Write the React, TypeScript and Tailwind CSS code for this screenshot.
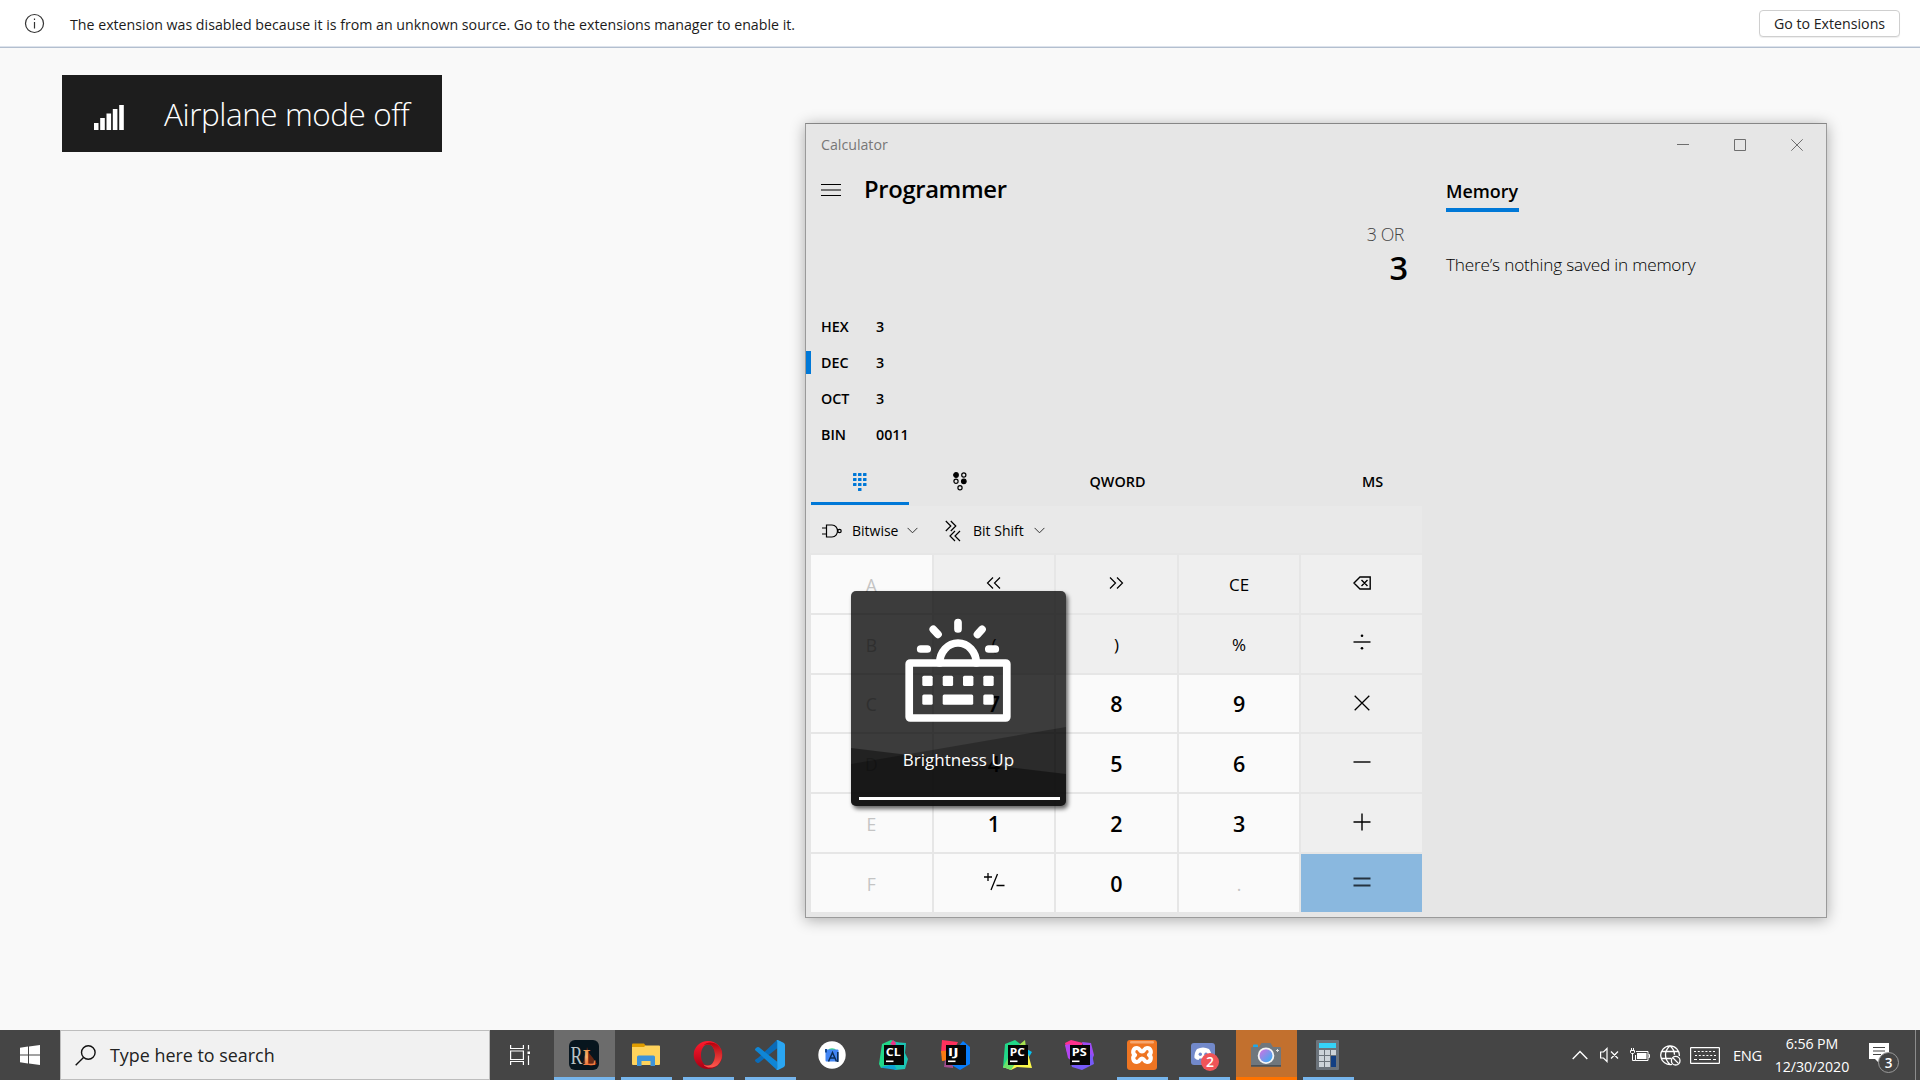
import React from "react";

const SANS = "font-['Open_Sans','Noto_Sans',sans-serif]";

function InfoBar() {
  return (
    <header className="flex h-12 items-center border-b border-[#b3bfcf] bg-white pr-5 pl-[24px] shadow-[inset_0_-1px_0_#dde3ec]">
      <svg width="21" height="21" viewBox="0 0 21 21" fill="none" stroke="#333" strokeWidth="1.2">
        <circle cx="10.5" cy="10.5" r="9" />
        <path d="M10.5 9v6.5M10.5 5.4v1.6" />
      </svg>
      <span className="mt-[2px] ml-[25px] flex-1 text-[14.2px] text-[#1b1b1b]">
        The extension was disabled because it is from an unknown source. Go to the extensions manager to enable it.
      </span>
      <button className="flex h-[27px] w-[141px] items-center justify-center rounded border border-[#cfcfcf] bg-white text-[14.2px] text-[#222] shadow-[0_1px_1px_#eee]">
        Go to Extensions
      </button>
    </header>
  );
}

function AirplaneToast() {
  return (
    <div className="mt-[27px] ml-[62px] flex h-[77px] w-[380px] items-center bg-[#1d1d1d] pl-[32px] text-white">
      <svg width="30" height="26" viewBox="0 0 30 26" fill="#fff" className="mt-[7px]">
        <rect x="0" y="19" width="4.5" height="7" />
        <rect x="6.2" y="14" width="4.6" height="12" />
        <rect x="12.5" y="9.5" width="4.6" height="16.5" />
        <rect x="18.8" y="5" width="4.6" height="21" />
        <rect x="25.2" y="1" width="4.6" height="25" />
      </svg>
      <span className="ml-[40px] text-[31.5px] font-light tracking-[-0.45px] whitespace-nowrap">Airplane mode off</span>
    </div>
  );
}

const bases = [
  ["HEX", "3"],
  ["DEC", "3"],
  ["OCT", "3"],
  ["BIN", "0011"],
];

const Stroke = ({ w = 18, d, sw = 1.4 }: { w?: number; d: string; sw?: number }) => (
  <svg width={w} height={w} viewBox={`0 0 ${w} ${w}`} fill="none" stroke="currentColor" strokeWidth={sw} className="-mt-[4px]">
    <path d={d} />
  </svg>
);

type Kind = "off" | "num" | "op" | "fn" | "eq";
const keys: [Kind, React.ReactNode][] = [
  ["off", "A"],
  ["op", <Stroke d="M8 3.5 2.500 9l5.500 5.500M15 3.500 9.500 9l5.500 5.500" sw={1.2} />],
  ["op", <Stroke d="M3 3.500 8.500 9l-5.500 5.500M10 3.500 15.500 9l-5.500 5.500" sw={1.2} />],
  ["op", "CE"],
  ["op", <Stroke d="M17.200 3H7L1 9l6 6h10.200zM8.500 6l6 6M14.500 6l-6 6" />],
  ["off", "B"],
  ["op", "("],
  ["op", ")"],
  ["op", "%"],
  [
    "op",
    <svg width="18" height="18" viewBox="0 0 18 18" className="-mt-[5px]">
      <path d="M.5 9h17" stroke="#000" strokeWidth="1.4" />
      <circle cx="9" cy="2.700" r="1.300" />
      <circle cx="9" cy="15.300" r="1.300" />
    </svg>,
  ],
  ["off", "C"],
  ["num", "7"],
  ["num", "8"],
  ["num", "9"],
  ["op", <Stroke d="M1.700 1.700 16.300 16.300M16.300 1.700 1.700 16.300" sw={1.3} />],
  ["off", "D"],
  ["num", "4"],
  ["num", "5"],
  ["num", "6"],
  ["op", <Stroke d="M.5 9h17" />],
  ["off", "E"],
  ["num", "1"],
  ["num", "2"],
  ["num", "3"],
  ["op", <Stroke d="M.5 9h17M9 .5v17" />],
  ["off", "F"],
  ["fn", <Stroke w={22} d="M1 6h8M5 2v8M14.500 3 8 19M13.500 14.500h8" sw={1.3} />],
  ["num", "0"],
  ["off", "."],
  ["eq", <Stroke d="M.5 5.500h17M.5 12.500h17" sw={1.8} />],
];
const kindClass: Record<Kind, string> = {
  off: "bg-[#fafafa] text-[#c4c4c4] text-[17.500px]",
  num: "bg-[#fafafa] text-black text-[21.500px] font-semibold",
  op: "bg-[#efefef] text-black text-[17px]",
  fn: "bg-[#fafafa] text-black",
  eq: "bg-[#8ab8df] text-[#253340]",
};

const Chevron = () => (
  <svg width="11" height="7" viewBox="0 0 11 7" fill="none" stroke="#333" strokeWidth="1">
    <path d="M.6.900 5.500 5.800 10.400.900" />
  </svg>
);

function Calculator() {
  return (
    <section className="absolute top-[123px] left-[805px] flex h-[795px] w-[1022px] flex-col border border-[#9a9a9a] border-t-[#868686] bg-[#e6e6e6] text-black shadow-[0_2px_14px_rgba(0,0,0,0.32)]">
      <div className="flex h-[42px] shrink-0 items-center pr-px pl-[15px] text-[#777]">
        <span className="flex-1 text-[14.200px]">Calculator</span>
        {["M0 5.500h12", "M.5.5h11v11H.5z", "M.3.3l11.400 11.400M11.700.3.3 11.700"].map((d) => (
          <span key={d} className="flex w-[57px] justify-center">
            <svg width="12" height="12" viewBox="0 0 12 12" fill="none" stroke="#6e6e6e" className="-mt-px">
              <path d={d} />
            </svg>
          </span>
        ))}
      </div>
      <div className="flex flex-1">
        <div className="flex w-[617px] flex-col">
          <div className="flex h-[48px] items-center pl-[15px]">
            <svg width="20" height="12" viewBox="0 0 20 12" stroke="#000" className="-mt-px">
              <path d="M0 .5h20M0 6h20M0 11.500h20" />
            </svg>
            <span className="ml-[23px] text-[23.800px] font-semibold tracking-[-0.350px]">Programmer</span>
          </div>
          <div className="flex h-[41px] items-center justify-end pr-[19px] text-[17.800px] font-light tracking-[-0.400px] text-[#444]">3 OR</div>
          <div className="flex h-[29px] items-center justify-end pr-[15px] pb-[3px] text-[32.500px] leading-none font-semibold">3</div>
          <div className="mt-[25px]">
            {bases.map(([name, value]) => (
              <div key={name} className="relative flex h-[36px] items-center pb-px pl-[15px] text-[14.300px] font-semibold">
                {name === "DEC" && <i className="absolute top-[6px] left-0 h-[23px] w-[5px] bg-[#0078d7]" />}
                <span className="w-[55px]">{name}</span>
                <span>{value}</span>
              </div>
            ))}
          </div>
          <div className="flex h-[53px] pl-[5px] text-[14.400px] font-semibold">
            <div className="mb-px flex w-[98px] items-center justify-center border-b-[3px] border-[#0078d7] pt-[9px]">
              <svg width="14" height="18" viewBox="0 0 14 18" fill="#0078d7">
                {[0, 5, 10].map((y) => [0, 5, 10].map((x) => <rect key={`${x}-${y}`} x={x} y={y} width="3.500" height="3" rx=".5" />))}
                <rect x="5" y="15" width="3.500" height="3" rx=".5" />
              </svg>
            </div>
            <div className="flex w-[102px] items-center justify-center pt-[4px]">
              <svg width="14" height="19" viewBox="0 0 14 19" fill="none" stroke="#000" strokeWidth="1.200">
                <circle cx="3" cy="3" r="2.300" fill="#000" />
                <circle cx="10.800" cy="3" r="2.100" />
                <circle cx="3" cy="9.300" r="2.100" />
                <circle cx="10.800" cy="9.300" r="2.300" fill="#000" />
                <circle cx="7" cy="15.800" r="2.100" />
              </svg>
            </div>
            <div className="flex w-[213px] items-center justify-center pt-[4px]">QWORD</div>
            <div className="mr-px ml-auto flex w-[99px] items-center justify-center pt-[4px]">MS</div>
          </div>
          <div className="mr-px ml-[4px] flex h-[47px] items-center bg-[#e9e9e9] pt-[2px] pl-[12px] text-[14px]">
            <svg width="20" height="14" viewBox="0 0 20 14" fill="none" stroke="#000" strokeWidth="1.200">
              <path d="M4.500 1h5.500c3.500 0 5.500 3 5.500 6s-2 6-5.500 6H4.500zM0 4h4.500M0 10h4.500" />
              <circle cx="17.500" cy="7" r="1.700" />
            </svg>
            <span className="ml-[10px] w-[55px]">Bitwise</span>
            <Chevron />
            <svg width="16" height="22" viewBox="0 0 16 22" fill="none" stroke="#000" strokeWidth="1.200" className="ml-[27px]">
              <path d="M.800 1l5 5-5 5M5.800 1l5 5-5 5M10 11l-5 5 5 5M15 11l-5 5 5 5" />
            </svg>
            <span className="ml-[12px] w-[61px]">Bit Shift</span>
            <Chevron />
          </div>
          <div className="mt-[2px] mr-px mb-[5px] ml-[5px] grid flex-1 grid-cols-5 grid-rows-6 gap-[2px]">
            {keys.map(([kind, label], i) => (
              <button key={i} className={`flex items-center justify-center pt-[2px] ${kindClass[kind]}`}>
                {label}
              </button>
            ))}
          </div>
        </div>
        <aside className="pl-[23px]">
          <div className="mt-[8px] flex h-[38px] w-[73px] items-center border-b-4 border-[#0078d7] text-[17.900px] font-semibold">Memory</div>
          <p className="mt-[40px] text-[17.200px] leading-[26px] font-light tracking-[-0.190px]">There’s nothing saved in memory</p>
        </aside>
      </div>
    </section>
  );
}

function BrightnessOverlay() {
  return (
    <div className="absolute top-[591px] left-[851px] h-[215px] w-[215px] rounded-[5px] shadow-[2px_3px_4px_rgba(0,0,0,0.600)]">
      <svg width="215" height="215" viewBox="0 0 215 215" className="absolute inset-0 rounded-[5px]">
        <rect width="215" height="215" fill="#000" opacity=".76" />
        <path d="M0 157 215 183V215H0z" opacity=".42" />
        <path d="M0 173 215 136V215H0z" opacity=".28" />
        <g fill="none" stroke="#fff" strokeWidth="7.700" strokeLinecap="round" strokeLinejoin="round">
          <rect x="58.200" y="72" width="97.600" height="55" rx="1" />
          <path d="M88.700 72a18.300 20 0 0 1 36.600 0" />
          <path d="M107 31.500v6.500M69.700 58h6.500M137.800 58h6.500M82.300 38.300l4.700 5M131 38.300l-4.500 5" />
        </g>
        <g fill="#fff">
          {[71.3, 91.7, 112, 132.3].map((x) => (
            <rect key={x} x={x} y="84.700" width="10.400" height="10.400" rx="1.500" />
          ))}
          <rect x="71.300" y="103.400" width="10.400" height="10.400" rx="1.500" />
          <rect x="91.700" y="103.400" width="30.500" height="10.400" rx="1.500" />
          <rect x="132.300" y="103.400" width="10.400" height="10.400" rx="1.500" />
        </g>
      </svg>
      <div className="relative flex h-full flex-col items-center pt-[156px]">
        <span className="text-[17px] leading-[26px] whitespace-nowrap text-white">Brightness Up</span>
        <i className="mt-[23.500px] ml-[2px] h-[3px] w-[201px] bg-white" />
      </div>
    </div>
  );
}

function JetBrains({ label, shapes }: { label: string; shapes: [string, string][] }) {
  return (
    <svg width="30" height="30" viewBox="0 0 30 30">
      {shapes.map(([d, fill]) => (
        <path key={d} d={d} fill={fill} />
      ))}
      <rect x="5" y="5" width="20" height="20" fill="#050505" />
      <text x="6.800" y="15.800" fontSize="11" fontWeight="700" fill="#fff" fontFamily="Open Sans, sans-serif" textLength={label === "IJ" ? 11 : 15} lengthAdjust="spacingAndGlyphs">
        {label}
      </text>
      <rect x="7" y="20.500" width="7.500" height="1.600" fill="#fff" />
    </svg>
  );
}

const RL = () => (
  <svg width="30" height="30" viewBox="0 0 30 30">
    <defs>
      <linearGradient id="fire" x1="0" y1="0" x2="0" y2="1">
        <stop offset="0" stopColor="#e98a3d" />
        <stop offset=".5" stopColor="#f7b070" />
        <stop offset="1" stopColor="#f0501c" />
      </linearGradient>
    </defs>
    <rect width="30" height="30" rx="6" fill="#07151e" />
    <path d="M14 23c2-4 0-6 3-9l1-7 2 6 4 5 4 6-6 2z" fill="#93300e" opacity=".7" />
    <text x="1.500" y="24" fontFamily="Liberation Serif, serif" fontSize="26" fill="#b9c2c5" textLength="12" lengthAdjust="spacingAndGlyphs">
      R
    </text>
    <text x="14" y="25" fontFamily="Liberation Serif, serif" fontSize="24" fontWeight="700" fill="url(#fire)" textLength="13" lengthAdjust="spacingAndGlyphs">
      L
    </text>
  </svg>
);

const Explorer = () => (
  <svg width="28" height="24" viewBox="0 0 28 24">
    <path d="M0 1.500Q0 .500 1 .500h11l2 2.500v3H0z" fill="#e09d00" />
    <path d="M0 4h12l1.500-1.500H27q1 0 1 1V21q0 1-1 1H1q-1 0-1-1z" fill="#ffd35c" />
    <path d="M5 23V14q0-1.500 1.500-1.500h15q1.500 0 1.500 1.500v9h-4.500v-5h-9v5z" fill="#3e93d8" />
  </svg>
);

const Opera = () => (
  <svg width="30" height="30" viewBox="0 0 30 30">
    <defs>
      <linearGradient id="op1" x1="0" y1="0" x2="0" y2="1">
        <stop offset="0" stopColor="#ff1b2d" />
        <stop offset="1" stopColor="#a70014" />
      </linearGradient>
      <linearGradient id="op2" x1="0" y1="0" x2="0" y2="1">
        <stop offset="0" stopColor="#b5000c" />
        <stop offset="1" stopColor="#ff5a4f" />
      </linearGradient>
    </defs>
    <path fillRule="evenodd" d="M15 1a14.300 14 0 1 0 0 28 14.300 14 0 0 0 0-28M15 4.500c4.500 0 7 5 7 10.500s-2.500 10.500-7 10.500S8 20.500 8 15 10.500 4.500 15 4.500" fill="url(#op1)" />
    <path d="M10.500 5.500C13 1.500 20 1.500 24.500 4.700a14 14 0 0 1 0 20.600C20 28.500 13 28.500 10.500 24.500c1.300 1 3 1.300 4.500 1 4.500 0 7-5 7-10.500S19.500 4.500 15 4.500c-1.500-.2-3.200.1-4.500 1" fill="url(#op2)" />
  </svg>
);

const VSCode = () => (
  <svg width="30" height="30" viewBox="0 0 30 30">
    <path d="M22 0 3.500 17.500.5 19.500q-1 1 0 2l1.500 1.200q1 .7 2 0L22.500 8z" fill="#0a6bb8" />
    <path d="M22 30 3.500 13 .5 10.500q-1-1 0-2L2 7.300q1-.7 2 0L22.500 22z" fill="#0f86d6" />
    <path d="M21.500.2q1-.4 2 .1l5 2.400q1.500.8 1.500 2.300v20q0 1.500-1.500 2.300l-5 2.500q-1 .4-2-.1.700-.7.700-2V2.200q0-1.300-.7-2" fill="#2aa6f3" />
  </svg>
);

const AndroidStudio = () => (
  <svg width="28" height="28" viewBox="0 0 28 28">
    <circle cx="14" cy="14" r="13.700" fill="#fff" />
    <path d="M9.500 9.500a5 4 0 0 1 9 0z" fill="#3ddc84" />
    <rect x="7.500" y="8.500" width="13" height="12" rx="1" fill="#4285f4" />
    <path d="M7 8h2v3.500H7z" fill="#174a93" />
    <path d="M10.500 20.500l4-9 4 9M12.500 17h4.500M19.800 11v10" fill="none" stroke="#0b2b52" strokeWidth="1.500" />
  </svg>
);

const Xampp = () => (
  <svg width="30" height="30" viewBox="0 0 30 30">
    <rect width="30" height="30" rx="3" fill="#ee7522" />
    <rect x="3" y="1" width="24" height="2.500" rx="1.200" fill="#f6a871" />
    <path
      d="M10 8c-4 0-5 5-2 7-3 2-2 7 2 7 3 0 2.500-3.500 5-3.500S17 22 20 22c4 0 5-5 2-7 3-2 2-7-2-7-3 0-2.500 3.500-5 3.500S13 8 10 8z"
      fill="none"
      stroke="#fff"
      strokeWidth="4.200"
      strokeLinejoin="round"
    />
  </svg>
);

const Discord = () => (
  <svg width="30" height="30" viewBox="0 0 30 30" className="overflow-visible">
    <rect x="2" y="3" width="24" height="22" rx="3" fill="#7289ca" />
    <path d="M8 9q6-3 12 0 3 4 2.500 9-2 2-4 2l-1-1.500h-7L9.500 20q-2 0-4-2Q5 13 8 9" fill="#fff" />
    <circle cx="11.300" cy="14.300" r="1.700" fill="#7289ca" />
    <circle cx="17" cy="14.300" r="1.700" fill="#7289ca" />
    <circle cx="21" cy="22" r="9" fill="#f05458" />
    <text x="21" y="27" textAnchor="middle" fontSize="14" fontWeight="600" fill="#fff" fontFamily="Open Sans, sans-serif">
      2
    </text>
  </svg>
);

const Camera = () => (
  <svg width="30" height="24" viewBox="0 0 30 24">
    <defs>
      <linearGradient id="lens" x1="0" y1="0" x2="1" y2="1">
        <stop offset="0" stopColor="#d56fe0" />
        <stop offset="1" stopColor="#2bb3f5" />
      </linearGradient>
    </defs>
    <rect x="2" y="1.500" width="5" height="4" rx="1" fill="#20a8e8" />
    <path d="M1 4h7l2.500-4h9L22 4h7q1 0 1 1v18.500H0V5q0-1 1-1" fill="#70777d" />
    <path d="M0 22h30v1.700H0z" fill="#4c5257" />
    <circle cx="15" cy="12.700" r="8.300" fill="#f4f4f4" />
    <circle cx="15" cy="12.700" r="6.500" fill="url(#lens)" />
    <path d="M25 7.500h3M26.500 6v3" stroke="#ddd" />
  </svg>
);

const CalcIcon = () => (
  <svg width="23" height="30" viewBox="0 0 23 30">
    <rect width="23" height="30" rx="1" fill="#6b737b" />
    <rect x="3" y="3" width="17" height="5" fill="#35d3f8" />
    {[10, 16, 22].map((y) => [3, 9, 15].map((x) => <rect key={`${x}-${y}`} x={x} y={y} width="5" height="5" fill="#ccd3d9" />))}
    <rect x="15" y="16" width="5" height="11" fill="#123f83" />
  </svg>
);

type App = { icon: React.ReactNode; state?: "active" | "open" | "alert" };
const apps: App[] = [
  { icon: <RL />, state: "active" },
  { icon: <Explorer />, state: "open" },
  { icon: <Opera />, state: "open" },
  { icon: <VSCode />, state: "open" },
  { icon: <AndroidStudio /> },
  {
    icon: (
      <JetBrains
        label="CL"
        shapes={[
          ["M3 4 12 0 20 3 10 26 2 28 0 24z", "#21d789"],
          ["M15 2 27 3 26 13 29 19 26 29 16 30 12 24z", "#1bc5b4"],
          ["M2 27 15 24 18 30 4 28z", "#0da3d7"],
          ["M11 4 14 0 17 3 16 6z", "#ed358c"],
        ]}
      />
    ),
  },
  {
    icon: (
      <JetBrains
        label="IJ"
        shapes={[
          ["M1 0 17 2 12 12 0 13z", "#fe315d"],
          ["M0 11 12 10 9 20 1 21z", "#f97a12"],
          ["M4 20 12 22 12 28 3 27z", "#a24b8f"],
          ["M17 7 22 1 29 7 29 24 19 30 9 24z", "#087cfa"],
        ]}
      />
    ),
  },
  {
    icon: (
      <JetBrains
        label="PC"
        shapes={[
          ["M2 4 12 0 20 6 12 26 0 28z", "#21d789"],
          ["M16 5 22 0 23 8z", "#a8e34f"],
          ["M22 8 29 12 26 17z", "#07c3f2"],
          ["M0 27 12 22 24 10 29 28 14 27 8 30z", "#fcf84a"],
          ["M0 27 5 18 12 24 8 30z", "#6be26a"],
        ]}
      />
    ),
  },
  {
    icon: (
      <JetBrains
        label="PS"
        shapes={[
          ["M0 3 6 0 18 3 12 14 2 12z", "#ff318c"],
          ["M0 5 5 4 8 22 3 18z", "#b345f1"],
          ["M17 2 26 3 29 15 25 25z", "#9c4bf5"],
          ["M5 20 12 24 27 14 29 24 17 30 7 27z", "#765af8"],
        ]}
      />
    ),
  },
  { icon: <Xampp />, state: "open" },
  { icon: <Discord />, state: "open" },
  { icon: <Camera />, state: "alert" },
  { icon: <CalcIcon />, state: "open" },
];

function TaskButton({ icon, state }: App) {
  const bg = state === "active" ? "bg-[#6c6c6c]" : state === "alert" ? "bg-[#c2702e]" : "";
  const line =
    state === "active" ? "w-full bg-[#76b5ec]" : state === "alert" ? "w-full bg-[#ff7300]" : state === "open" ? "w-[51px] bg-[#76b5ec]" : "w-0";
  return (
    <div className={`mr-px flex h-full w-[61px] flex-col items-center ${bg}`}>
      <div className="flex flex-1 items-center pt-[3px] pr-[2px]">{icon}</div>
      <i className={`h-[3px] ${line}`} />
    </div>
  );
}

function Tray() {
  return (
    <div className="ml-auto flex h-full items-center text-white">
      <svg width="16" height="10" viewBox="0 0 16 10" fill="none" stroke="#fff" strokeWidth="1.400">
        <path d="M.7 9 8 1.500 15.300 9" />
      </svg>
      <svg width="19" height="16" viewBox="0 0 19 16" fill="none" stroke="#fff" strokeWidth="1.200" className="ml-[12px]">
        <path d="M.600 5h2.900L7 1.500v13L3.500 11H.6zM11 4.500l7 7M18 4.500l-7 7" />
      </svg>
      <svg width="20" height="15" viewBox="0 0 20 15" fill="none" stroke="#fff" className="ml-[11px]">
        <path d="M1.500 0v2M3.500 0v2M.5 2.500h4v2l-1 1h-2l-1-1zM2.500 5.500v7h3M6 3.500h12v9H5.500V7M18.500 6.500h1v3h-1" />
        <rect x="7" y="5" width="9.500" height="6" fill="#fff" stroke="none" />
      </svg>
      <svg width="21" height="21" viewBox="0 0 21 21" fill="none" stroke="#fff" strokeWidth="1.300" className="ml-[10px]">
        <path d="M12 19.300A9.300 9.300 0 1 1 19.300 11M10 .800C4 6 4 14 10 19.400M10 .800c3.500 3 4.500 6 4.500 9M1.300 6.500h17M1.300 13.500h10" />
        <circle cx="15.700" cy="15.700" r="4.300" />
        <path d="m12.800 12.800 5.800 5.800" />
      </svg>
      <svg width="30" height="17" viewBox="0 0 30 17" fill="none" stroke="#fff" strokeWidth="1.200" className="ml-[9px]">
        <rect x=".600" y=".600" width="28.800" height="15.800" rx=".5" />
        <path d="M4 4.500h22M5 8.500h21" strokeDasharray="2 1.800" />
        <path d="M4 12.500h3M9 12.500h12M23 12.500h3" />
      </svg>
      <span className="ml-[13px] w-[30px] text-[14.700px] tracking-[-0.300px]">ENG</span>
      <div className="ml-[9px] flex w-[80px] flex-col items-center text-[14.200px] leading-[23px] tracking-[-0.100px] whitespace-nowrap">
        <span>6:56 PM</span>
        <span>12/30/2020</span>
      </div>
      <svg width="32" height="34" viewBox="0 0 32 34" className="mt-[8px] ml-[17px]">
        <path d="M0 1h20v16H10v4l-4-4H0z" fill="#fff" />
        <path d="M4 5.500h12M4 9h12M4 12.500h8" stroke="#444" strokeWidth="1.200" />
        <circle cx="19.500" cy="20.500" r="10" fill="#444" stroke="#9a9a9a" />
        <text x="19.500" y="25.500" textAnchor="middle" fontSize="13.500" fontWeight="600" fill="#fff" fontFamily="Open Sans, sans-serif">
          3
        </text>
      </svg>
      <i className="mr-[4px] ml-[14px] h-full w-px bg-[#8c8c8c]" />
    </div>
  );
}

function Taskbar() {
  return (
    <footer className="mt-auto flex h-[50px] items-center bg-[#454545]">
      <div className="flex w-[60px] justify-center">
        <svg width="20" height="20" viewBox="0 0 20 20" fill="#fff">
          <path d="M0 2.700 8 1.600v7.900H0zM9 1.500 20 0v9.500H9zM0 10.500h8v7.900l-8-1.100zM9 10.500h11V20L9 18.500z" />
        </svg>
      </div>
      <div className="flex h-[50px] w-[430px] items-center border border-[#bdbdbd] bg-[#f1f1f1] pl-[14px]">
        <svg width="21" height="21" viewBox="0 0 21 21" fill="none" stroke="#111" strokeWidth="1.400">
          <circle cx="13.300" cy="7.500" r="6.800" />
          <path d="M8.500 12.500.700 20.300" />
        </svg>
        <span className="ml-[14px] text-[17.900px] text-[#222]">Type here to search</span>
      </div>
      <div className="flex w-[64px] pl-[20px]">
        <svg width="21" height="20" viewBox="0 0 21 20" fill="none" stroke="#fff" strokeWidth="1.200">
          <path d="M.600 0v3.500h12.800V0M.600 20v-3.500h12.800V20M.600 6h12.800v8.500H.600zM18.500 0v4.500M18.500 10.500V20" />
          <rect x="17.500" y="6.500" width="2.500" height="2.500" fill="#fff" stroke="none" />
        </svg>
      </div>
      {apps.map((app, i) => (
        <TaskButton key={i} {...app} />
      ))}
      <Tray />
    </footer>
  );
}

export default function App() {
  return (
    <div className={`relative flex h-[1080px] w-[1920px] flex-col overflow-hidden bg-[#f9f9f9] ${SANS}`}>
      <InfoBar />
      <AirplaneToast />
      <Calculator />
      <BrightnessOverlay />
      <Taskbar />
    </div>
  );
}
